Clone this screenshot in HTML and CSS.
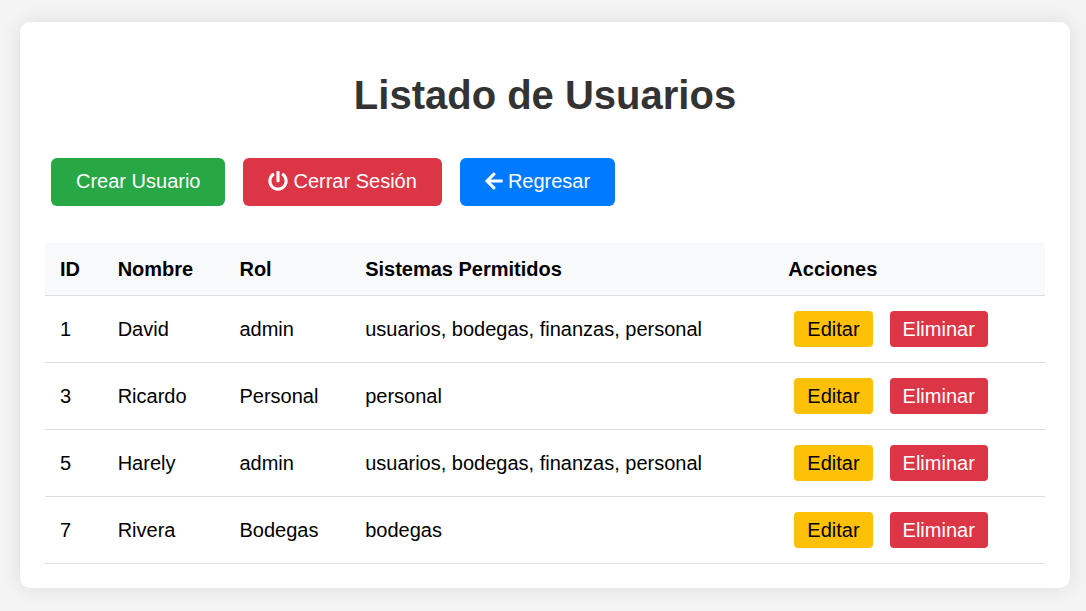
FILE: index.html
```html
<!DOCTYPE html>
<html lang="es">
<head>
<meta charset="utf-8">
<meta name="viewport" content="width=device-width, initial-scale=1">
<title>Listado de Usuarios</title>
<link rel="stylesheet" href="styles.css">
</head>
<body>
<main class="card">
  <h1 class="title">Listado de Usuarios</h1>
  <nav class="toolbar">
    <a class="btn btn-success" href="#crear">Crear Usuario</a>
    <a class="btn btn-danger" href="#salir"><svg class="icon" viewBox="0 0 512 512" width="20" height="20" aria-hidden="true"><path d="M400 54.1c63 45 104 118.6 104 201.9 0 136.8-110.8 247.7-247.5 248C120 504.3 8.2 393 8 256.4 7.9 173.1 48.9 99.3 111.8 54.2c11.7-8.3 28-4.8 35 7.7L162.6 90c5.9 10.5 3.1 23.8-6.6 31-41.5 30.8-68 79.6-68 134.9-.1 92.3 74.5 168.1 168 168.1 91.6 0 168.6-74.2 168-169.1-.3-51.8-24.7-101.8-68.1-134-9.7-7.2-12.4-20.5-6.5-30.9l15.8-28.1c7-12.4 23.2-16.1 34.8-7.8zM296 264V24c0-13.3-10.7-24-24-24h-32c-13.3 0-24 10.7-24 24v240c0 13.3 10.7 24 24 24h32c13.3 0 24-10.7 24-24z"/></svg>Cerrar Sesión</a>
    <a class="btn btn-primary" href="#regresar"><svg class="icon" viewBox="0 0 448 512" width="18" height="20" aria-hidden="true"><path d="M257.5 445.1l-22.2 22.2c-9.4 9.4-24.6 9.4-33.9 0L7 273c-9.4-9.4-9.4-24.6 0-33.9L201.4 44.7c9.4-9.4 24.6-9.4 33.9 0l22.2 22.2c9.5 9.5 9.3 25-.4 34.3L136.6 216H424c13.3 0 24 10.7 24 24v32c0 13.3-10.7 24-24 24H136.6l120.5 114.8c9.8 9.3 10 24.8.4 34.3z"/></svg>Regresar</a>
  </nav>
  <table class="users">
    <thead>
      <tr><th scope="col">ID</th><th scope="col">Nombre</th><th scope="col">Rol</th><th scope="col">Sistemas Permitidos</th><th scope="col">Acciones</th></tr>
    </thead>
    <tbody>
      <tr><td>1</td><td>David</td><td>admin</td><td>usuarios, bodegas, finanzas, personal</td>
        <td><div class="actions"><a class="btn-sm btn-warning" href="#editar-1">Editar</a><a class="btn-sm btn-danger" href="#eliminar-1">Eliminar</a></div></td></tr>
      <tr><td>3</td><td>Ricardo</td><td>Personal</td><td>personal</td>
        <td><div class="actions"><a class="btn-sm btn-warning" href="#editar-3">Editar</a><a class="btn-sm btn-danger" href="#eliminar-3">Eliminar</a></div></td></tr>
      <tr><td>5</td><td>Harely</td><td>admin</td><td>usuarios, bodegas, finanzas, personal</td>
        <td><div class="actions"><a class="btn-sm btn-warning" href="#editar-5">Editar</a><a class="btn-sm btn-danger" href="#eliminar-5">Eliminar</a></div></td></tr>
      <tr><td>7</td><td>Rivera</td><td>Bodegas</td><td>bodegas</td>
        <td><div class="actions"><a class="btn-sm btn-warning" href="#editar-7">Editar</a><a class="btn-sm btn-danger" href="#eliminar-7">Eliminar</a></div></td></tr>
    </tbody>
  </table>
</main>
</body>
</html>
```
FILE: styles.css
```css
* { box-sizing: border-box; }

body {
  margin: 0;
  padding: 22px 16px 22px 20px;
  background: #f4f4f4;
  color: #000;
  font-family: "Liberation Sans", Arial, sans-serif;
  font-size: 20px;
  line-height: 22px;
}

.card {
  padding: 49px 25px 24px;
  background: #fff;
  border-radius: 10px;
  box-shadow: 0 0 20px rgba(0, 0, 0, 0.1);
}

.title {
  margin: 0 0 39px;
  color: #333;
  font-size: 40px;
  line-height: 48px;
  text-align: center;
}

.toolbar {
  display: flex;
  flex-wrap: wrap;
  gap: 18px;
  margin-bottom: 37px;
  padding: 0 6px;
}

.btn {
  display: inline-flex;
  align-items: center;
  gap: 5px;
  padding: 11px 25px 13px;
  border-radius: 6px;
  line-height: 24px;
  text-decoration: none;
}

.icon { fill: currentColor; }

.btn-success { background: #28a745; color: #fff; }
.btn-danger { background: #dc3545; color: #fff; }
.btn-primary { background: #007bff; color: #fff; }
.btn-warning { background: #ffc107; color: #000; }

.users {
  width: 100%;
  border-collapse: separate;
  border-spacing: 0;
}

.users th,
.users td {
  padding: 15px;
  border-bottom: 1px solid #ddd;
  text-align: left;
}

.users th { background: #f8f9fa; }

.actions {
  display: flex;
  gap: 17px;
  padding: 0 6px;
}

.btn-sm {
  padding: 6px 13px;
  border-radius: 4px;
  line-height: 24px;
  text-decoration: none;
}
```
